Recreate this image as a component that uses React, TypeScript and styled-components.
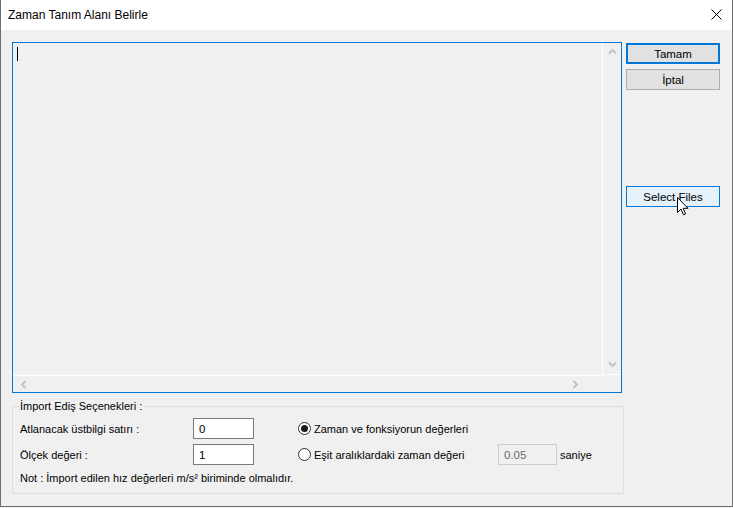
import React from "react";
import styled, { createGlobalStyle } from "styled-components";

const GlobalStyle = createGlobalStyle`
  html, body {
    margin: 0;
    padding: 0;
    background: #f0f0f0;
  }
  body {
    font-family: "Liberation Sans", "Noto Sans", sans-serif;
    font-size: 11px;
    color: #000;
  }
`;

const Window = styled.div`
  width: 733px;
  height: 507px;
  box-sizing: border-box;
  border-left: 1px solid #707070;
  border-right: 1px solid #707070;
  border-bottom: 1px solid #707070;
  background: #f0f0f0;
  display: flex;
  flex-direction: column;
`;

const TitleBar = styled.div`
  height: 30px;
  flex-shrink: 0;
  background: #ffffff;
  display: flex;
  align-items: center;
  justify-content: space-between;
  padding: 0 10px 0 7px;
`;

const Title = styled.div`
  font-size: 12px;
  color: #000;
  margin-top: -1px;
`;

const CloseButton = styled.div`
  width: 12px;
  height: 12px;
  display: flex;
  align-items: center;
  justify-content: center;
  margin-top: -2px;
`;

const Body = styled.div`
  flex: 1;
  display: flex;
  flex-direction: column;
  padding: 12px 0 0 11px;
  position: relative;
`;

const TopRow = styled.div`
  display: flex;
  gap: 4px;
`;

const Editor = styled.div`
  width: 610px;
  height: 351px;
  box-sizing: border-box;
  border: 1px solid #0078d7;
  display: grid;
  grid-template-columns: 1fr 19px;
  grid-template-rows: 1fr 17px;
`;

const TextArea = styled.div`
  padding: 4px 0 0 4px;
`;

const Caret = styled.div`
  width: 1px;
  height: 14px;
  background: #000;
`;

const VScroll = styled.div`
  border-left: 1px solid #ffffff;
  border-bottom: 1px solid #ffffff;
  display: flex;
  flex-direction: column;
  justify-content: space-between;
  align-items: center;
  padding: 4px 0 5px;
`;

const HScroll = styled.div`
  border-top: 1px solid #ffffff;
  display: flex;
  justify-content: space-between;
  align-items: center;
  padding: 0 22px 0 6px;
`;

const Corner = styled.div``;

const ButtonColumn = styled.div`
  width: 94px;
  padding-top: 1px;
  display: flex;
  flex-direction: column;
`;

const Button = styled.div<{ $variant?: "primary" | "hover" }>`
  height: 21px;
  box-sizing: border-box;
  margin-bottom: ${(p) => (p.$variant === "primary" ? "5px" : "0")};
  border: ${(p) =>
    p.$variant === "primary"
      ? "2px solid #0078d7"
      : p.$variant === "hover"
      ? "1px solid #0078d7"
      : "1px solid #adadad"};
  background: ${(p) => (p.$variant === "hover" ? "#e5f1fb" : "#e1e1e1")};
  display: flex;
  align-items: center;
  justify-content: center;
  font-size: 11.5px;
`;

const Spacer = styled.div<{ $h: number }>`
  height: ${(p) => p.$h}px;
`;

const Group = styled.fieldset`
  width: 612px;
  box-sizing: border-box;
  margin: 5px 0 0 0;
  padding: 4px 0 7px 7px;
  border: 1px solid #dcdcdc;
  min-inline-size: auto;
`;

const Legend = styled.legend`
  padding: 0 2px 0 1px;
  margin-left: -1px;
  line-height: 16px;
`;

const Row = styled.div`
  display: flex;
  align-items: center;
  height: 21px;
  margin-bottom: 5px;
`;

const FieldLabel = styled.div`
  width: 173px;
`;

const TextInput = styled.div<{ $disabled?: boolean }>`
  width: ${(p) => (p.$disabled ? 59 : 61)}px;
  height: 21px;
  box-sizing: border-box;
  border: 1px solid ${(p) => (p.$disabled ? "#cccccc" : "#7a7a7a")};
  background: ${(p) => (p.$disabled ? "#f0f0f0" : "#ffffff")};
  color: ${(p) => (p.$disabled ? "#6d6d6d" : "#000")};
  padding-left: 5px;
  display: flex;
  align-items: center;
  font-size: 11.5px;
`;

const RadioOption = styled.div`
  margin-left: 44px;
  width: 200px;
  display: flex;
  align-items: center;
  gap: 3px;
`;

const RadioCircle = styled.span<{ $checked?: boolean }>`
  width: 13px;
  height: 13px;
  box-sizing: border-box;
  border-radius: 50%;
  border: 1px solid #333333;
  background: #ffffff;
  display: flex;
  align-items: center;
  justify-content: center;
  &::after {
    content: "";
    width: 7px;
    height: 7px;
    border-radius: 50%;
    background: ${(p) => (p.$checked ? "#1a1a1a" : "transparent")};
  }
`;

const Unit = styled.div`
  margin-left: 3px;
`;

const Note = styled.div`
  margin-top: 2px;
  line-height: 16px;
`;

const Pointer = styled.div`
  position: absolute;
  left: 676px;
  top: 167px;
  pointer-events: none;
`;

const Chevron = ({ dir }: { dir: "up" | "down" | "left" | "right" }) => {
  const rot = { up: 0, right: 90, down: 180, left: 270 }[dir];
  return (
    <svg width="9" height="9" viewBox="0 0 9 9" style={{ transform: `rotate(${rot}deg)` }}>
      <path d="M1 6.5 L4.5 3 L8 6.5" fill="none" stroke="#c2c2c2" strokeWidth="1.8" />
    </svg>
  );
};

export default function App() {
  return (
    <>
      <GlobalStyle />
      <Window>
        <TitleBar>
          <Title>Zaman Tanım Alanı Belirle</Title>
          <CloseButton>
            <svg width="11" height="11" viewBox="0 0 11 11">
              <path d="M0.5 0.5 L10.5 10.5 M10.5 0.5 L0.5 10.5" stroke="#000" strokeWidth="1" />
            </svg>
          </CloseButton>
        </TitleBar>
        <Body>
          <TopRow>
            <Editor>
              <TextArea>
                <Caret />
              </TextArea>
              <VScroll>
                <Chevron dir="up" />
                <Chevron dir="down" />
              </VScroll>
              <HScroll>
                <Chevron dir="left" />
                <Chevron dir="right" />
              </HScroll>
              <Corner />
            </Editor>
            <ButtonColumn>
              <Button $variant="primary">Tamam</Button>
              <Button>İptal</Button>
              <Spacer $h={96} />
              <Button $variant="hover">Select Files</Button>
            </ButtonColumn>
          </TopRow>
          <Group>
            <Legend>İmport Ediş Seçenekleri :</Legend>
            <Row>
              <FieldLabel>Atlanacak üstbilgi satırı :</FieldLabel>
              <TextInput>0</TextInput>
              <RadioOption>
                <RadioCircle $checked />
                Zaman ve fonksiyorun değerleri
              </RadioOption>
            </Row>
            <Row>
              <FieldLabel>Ölçek değeri :</FieldLabel>
              <TextInput>1</TextInput>
              <RadioOption>
                <RadioCircle />
                Eşit aralıklardaki zaman değeri
              </RadioOption>
              <TextInput $disabled>0.05</TextInput>
              <Unit>saniye</Unit>
            </Row>
            <Note>Not : İmport edilen hız değerleri m/s² biriminde olmalıdır.</Note>
          </Group>
          <Pointer>
            <svg width="12" height="19" viewBox="0 0 12 19">
              <path
                d="M0.5 0.5 L0.5 15.5 L4 12 L6.5 17.8 L8.6 16.9 L6.2 11.3 L11 11.3 Z"
                fill="#ffffff"
                stroke="#000"
                strokeWidth="1"
                strokeLinejoin="round"
              />
            </svg>
          </Pointer>
        </Body>
      </Window>
    </>
  );
}
